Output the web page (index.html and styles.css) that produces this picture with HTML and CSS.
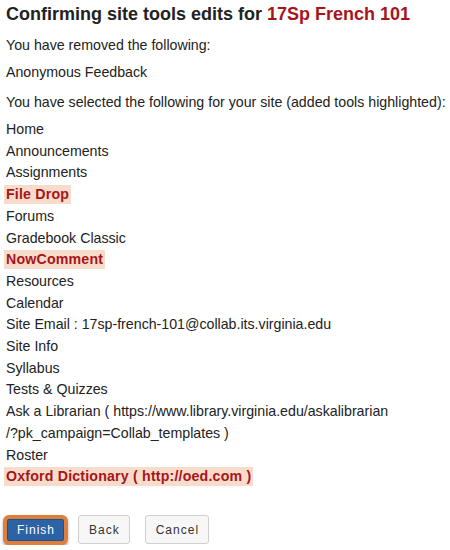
FILE: index.html
```html
<!DOCTYPE html>
<html>
<head>
<meta charset="utf-8">
<link rel="stylesheet" href="styles.css">
</head>
<body>
<div class="page">
  <h1 class="title">Confirming site tools edits for <span class="site">17Sp French 101</span></h1>
  <p class="para">You have removed the following:</p>
  <p class="para para-tight">Anonymous Feedback</p>
  <p class="para para-nowrap">You have selected the following for your site (added tools highlighted):</p>
  <ul class="tools">
    <li>Home</li>
    <li>Announcements</li>
    <li>Assignments</li>
    <li><span class="added">File Drop</span></li>
    <li>Forums</li>
    <li>Gradebook Classic</li>
    <li><span class="added">NowComment</span></li>
    <li>Resources</li>
    <li>Calendar</li>
    <li>Site Email : 17sp-french-101@collab.its.virginia.edu</li>
    <li>Site Info</li>
    <li>Syllabus</li>
    <li>Tests &amp; Quizzes</li>
    <li>Ask a Librarian ( https://www.library.virginia.edu/askalibrarian<br>/?pk_campaign=Collab_templates )</li>
    <li>Roster</li>
    <li><span class="added">Oxford Dictionary ( http://oed.com )</span></li>
  </ul>
  <div class="actions">
    <button class="btn btn-primary">Finish</button>
    <button class="btn btn-back">Back</button>
    <button class="btn btn-cancel">Cancel</button>
  </div>
</div>
</body>
</html>
```
FILE: styles.css
```css
html, body {
  margin: 0;
  padding: 0;
  background: #fff;
}
body {
  font-family: "Liberation Sans", Arial, sans-serif;
  color: #222;
  font-size: 14.2px;
}
.page {
  padding: 0 0 0 6px;
}
.title {
  margin: 0;
  padding-top: 2px;
  font-size: 18px;
  line-height: 24px;
  font-weight: bold;
  color: #222;
}
.site {
  color: #a8141b;
}
.para {
  margin: 0;
  padding-top: 8px;
  line-height: 22px;
}
.para-tight {
  padding-top: 5px;
}
.para-nowrap {
  white-space: nowrap;
}
.tools {
  list-style: none;
  margin: 6px 0 0;
  padding: 0;
  line-height: 21.7px;
}
.added {
  display: inline-block;
  margin-left: -2px;
  padding: 0 2px 0 2px;
  line-height: 19px;
  letter-spacing: 0.18px;
  background: #f7dccb;
  color: #a8141b;
  font-weight: bold;
}
.actions {
  display: flex;
  align-items: center;
  margin-top: 27px;
  margin-left: -3px;
}
.btn {
  font-family: "Liberation Sans", Arial, sans-serif;
  font-size: 12px;
  letter-spacing: 1px;
  color: #333;
  background: #f7f7f7;
  border: 1px solid #cfcfcf;
  border-radius: 3px;
  height: 29px;
  padding: 0 9px 0 10px;
}
.btn-primary {
  height: 30px;
  background: #2c62a6;
  color: #fff;
  border: 4px solid #df7f3c;
  border-radius: 6px;
  padding: 0 9px 0 10px;
  box-shadow: inset 0 0 0 1px #1f4f8f, 0 2px 3px rgba(0, 0, 0, 0.35);
}
.btn-back {
  margin-left: 10px;
}
.btn-cancel {
  margin-left: 15px;
}
```
